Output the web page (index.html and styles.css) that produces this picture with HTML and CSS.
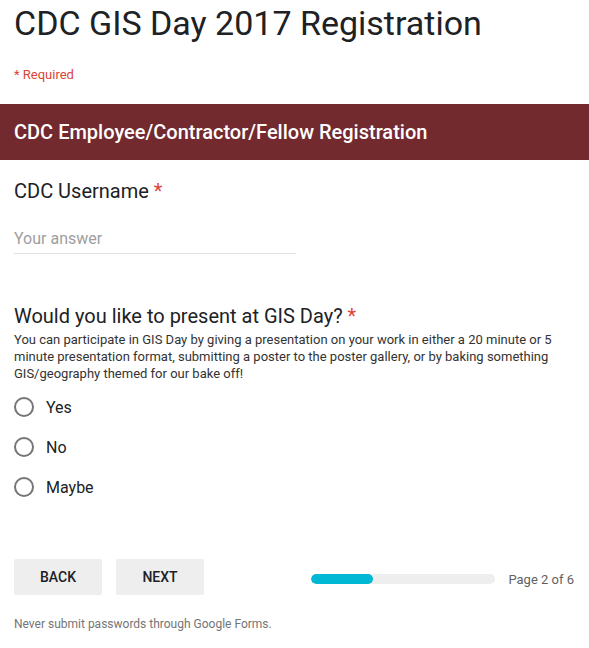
FILE: index.html
```html
<!DOCTYPE html>
<html>
<head>
<meta charset="utf-8">
<link rel="stylesheet" href="styles.css">
</head>
<body>
<div class="form">
  <h1 class="title">CDC GIS Day 2017 Registration</h1>
  <div class="required">* Required</div>
  <div class="section-header">CDC Employee/Contractor/Fellow Registration</div>

  <div class="question q-text">
    <div class="q-title">CDC Username <span class="star">*</span></div>
    <div class="answer">Your answer</div>
  </div>

  <div class="question q-radio">
    <div class="q-title">Would you like to present at GIS Day? <span class="star">*</span></div>
    <div class="q-desc">You can participate in GIS Day by giving a presentation on your work in either a 20 minute or 5 minute presentation format, submitting a poster to the poster gallery, or by baking something GIS/geography themed for our bake off!</div>
    <div class="options">
      <label class="option"><span class="radio"></span><span class="opt-label">Yes</span></label>
      <label class="option"><span class="radio"></span><span class="opt-label">No</span></label>
      <label class="option"><span class="radio"></span><span class="opt-label">Maybe</span></label>
    </div>
  </div>

  <div class="nav">
    <div class="buttons">
      <div class="btn">BACK</div>
      <div class="btn">NEXT</div>
    </div>
    <div class="progress">
      <div class="track"><div class="fill" style="width:33.3%"></div></div>
      <div class="page">Page 2 of 6</div>
    </div>
  </div>

  <div class="footer">Never submit passwords through Google Forms.</div>
</div>
</body>
</html>
```
FILE: styles.css
```css
* { box-sizing: border-box; }
html, body { margin: 0; padding: 0; background: #fff; }
body { font-family: Roboto, "Noto Sans", Arial, sans-serif; color: #202124; }
.form { width: 589px; }
.title {
  margin: 0;
  padding: 2px 14px 0;
  font-size: 34px;
  font-weight: 400;
  line-height: 42px;
  color: #202124;
}
.required {
  padding: 21px 14px 0;
  font-size: 13px;
  line-height: 20px;
  color: #db4437;
}
.section-header {
  margin-top: 19px;
  height: 56px;
  background: #722a2e;
  color: #fff;
  font-size: 20px;
  font-weight: 500;
  line-height: 56px;
  padding: 0 14px;
}
.question { padding: 0 14px; }
.q-title {
  font-size: 20px;
  line-height: 26px;
  color: #202124;
}
.star { color: #db4437; }
.q-text { padding-top: 18px; }
.answer {
  margin-top: 23px;
  width: 282px;
  font-size: 16px;
  line-height: 24px;
  color: #9e9e9e;
  padding-bottom: 2px;
  border-bottom: 1px solid #e0e0e0;
}
.q-radio { padding-top: 49px; }
.q-desc {
  font-size: 13px;
  line-height: 17px;
  color: #333;
  margin-top: 2px;
}
.options { display: flex; flex-direction: column; gap: 20px; margin-top: 15px; }
.option { display: flex; align-items: center; gap: 12px; height: 20px; }
.radio {
  width: 20px; height: 20px;
  border: 2px solid #757575;
  border-radius: 50%;
}
.opt-label { font-size: 16px; color: #202124; }
.nav {
  display: flex;
  align-items: center;
  justify-content: space-between;
  padding: 0 15px 0 14px;
  margin-top: 62px;
}
.buttons { display: flex; gap: 14px; }
.btn {
  width: 88px; height: 36px;
  background: #eeeeee;
  border-radius: 2px;
  font-size: 14px;
  font-weight: 500;
  line-height: 36px;
  text-align: center;
  color: #202124;
}
.progress { display: flex; align-items: center; gap: 13px; margin-top: 4px; }
.track {
  width: 184px; height: 10px;
  border-radius: 5px;
  background: #eeeeee;
  overflow: hidden;
}
.fill { height: 100%; background: #00b8d4; border-radius: 5px; }
.page { font-size: 13px; color: #616161; }
.footer {
  padding: 22px 14px 0;
  font-size: 12px;
  color: #757575;
}
```
